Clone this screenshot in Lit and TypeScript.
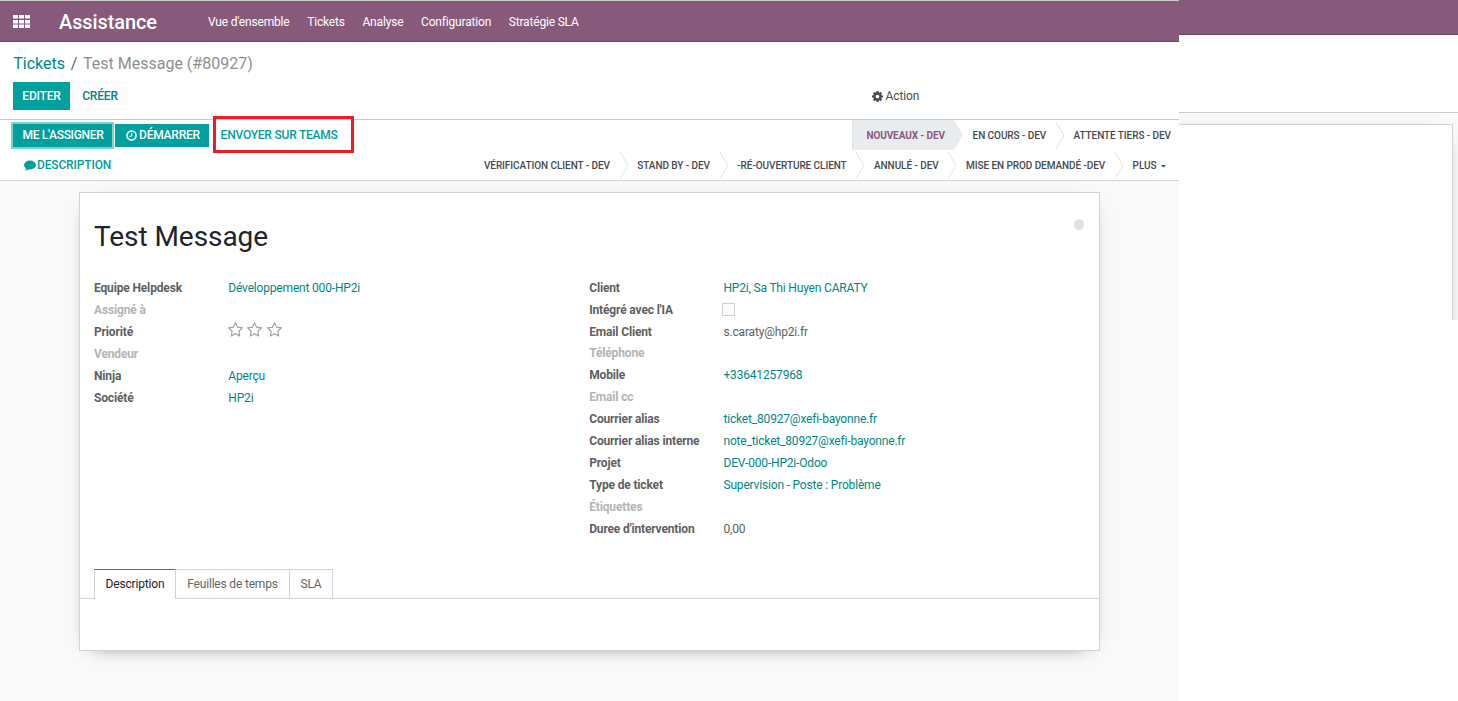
import { LitElement, html, css, svg, nothing } from "lit";
import { customElement } from "lit/decorators.js";

interface Field { label: string; value?: string; kind?: "link" | "text" | "stars" | "check"; short?: boolean; }

const LEFT: Field[] = [
  { label: "Equipe Helpdesk", value: "Développement 000-HP2i", kind: "link" },
  { label: "Assigné à" },
  { label: "Priorité", kind: "stars" },
  { label: "Vendeur" },
  { label: "Ninja", value: "Aperçu", kind: "link" },
  { label: "Société", value: "HP2i", kind: "link" },
];
const RIGHT: Field[] = [
  { label: "Client", value: "HP2i, Sa Thi Huyen CARATY", kind: "link" },
  { label: "Intégré avec l'IA", kind: "check" },
  { label: "Email Client", value: "s.caraty@hp2i.fr", kind: "text", short: true },
  { label: "Téléphone" },
  { label: "Mobile", value: "+33641257968", kind: "link" },
  { label: "Email cc" },
  { label: "Courrier alias", value: "ticket_80927@xefi-bayonne.fr", kind: "link" },
  { label: "Courrier alias interne", value: "note_ticket_80927@xefi-bayonne.fr", kind: "link" },
  { label: "Projet", value: "DEV-000-HP2i-Odoo", kind: "link" },
  { label: "Type de ticket", value: "Supervision - Poste : Problème", kind: "link" },
  { label: "Étiquettes" },
  { label: "Duree d'intervention", value: "0,00", kind: "text" },
];

const star = html`<svg class="star" viewBox="0 0 1664 1600">${svg`<path fill="currentColor" d="M1137 967l306-297-422-62-189-382-189 382-422 62 306 297-73 421 378-199 377 199zm527-357q0 22-26 48l-363 354 86 500q1 7 1 20 0 50-41 50-19 0-40-12l-449-236-449 236q-22 12-40 12-21 0-31.500-14.500t-10.500-35.500q0-6 2-20l86-500-364-354q-25-27-25-48 0-37 56-46l502-73 225-455q19-41 49-41t49 41l225 455 502 73q56 9 56 46z"/>`}</svg>`;

@customElement("app-root")
export class AppRoot extends LitElement {
  static styles = css`
    :host { display: flex; width: 1458px; height: 701px; overflow: hidden; background: #fff; font: 12px/18px Roboto, sans-serif; letter-spacing: -0.18px; color: #4c4c4c; }
    * { box-sizing: border-box; white-space: nowrap; }
    svg { display: block; flex: none; }
    .main { width: 1179px; height: 701px; display: flex; flex-direction: column; background: #f9f9f9; overflow: hidden; }
    .nav { height: 42px; flex: none; display: flex; align-items: center; border-top: 1px solid #ccc; border-bottom: 1px solid #68465f; background: #875a7b; color: #fff; padding-left: 13px; }
    .brand { font-size: 20px; font-weight: 500; margin-left: 29px; width: 149px; line-height: 24px; padding-top: 1px; letter-spacing: -0.1px; }
    .menu { display: flex; gap: 17.700px; padding-top: 2px; }
    .panel { height: 78px; flex: none; background: #fff; border-bottom: 1px solid #ccc; padding: 10px 0 0 13px; }
    .crumbs { display: flex; gap: 5.700px; font-size: 16px; line-height: 24px; height: 30px; color: #666; letter-spacing: 0; padding-left: 0.300px; }
    .crumbs a { color: #008784; }
    .crumbs .here { color: #8f8f8f; }
    .acts { display: flex; align-items: center; height: 28px; font-weight: 500; }
    .edit { width: 57px; height: 28px; background: #00a09d; color: #fff; display: grid; place-items: center; }
    .new { width: 54px; height: 28px; margin-left: 3px; border: 1px solid #f8f8f8; background: #fdfdfd; color: #008784; display: grid; place-items: center; }
    .action { display: flex; align-items: center; gap: 2.500px; margin-left: 745px; font-weight: 400; color: #4c4c4c; letter-spacing: -0.1px; }
    .status { height: 61px; flex: none; background: #fff; border-bottom: 1px solid #ced4da; display: flex; justify-content: space-between; }
    .btns { padding: 4px 0 0 13px; font-weight: 500; letter-spacing: -0.22px; }
    .brow { display: flex; }
    .b { height: 23px; background: #00a09d; color: #fff; display: flex; align-items: center; justify-content: center; gap: 2px; padding-bottom: 1px; }
    .b1 { width: 99px; box-shadow: 0 0 0 2px #80d0ce; padding-left: 1px; letter-spacing: -0.3px; }
    .b2 { width: 94px; margin-left: 3px; padding-left: 2px; }
    .red { width: 141px; height: 37px; margin: -8px 0 -6px 4px; border: 3px solid #ed1c24; color: #00a09d; position: relative; padding: 7px 0 0 4.600px; }
    .desc { display: flex; align-items: center; gap: 1px; color: #00a09d; margin: 9px 0 0 11px; letter-spacing: -0.15px; }
    .steps { font-size: 10px; font-weight: 500; color: #454b50; letter-spacing: -0.07px; padding-right: 8px; }
    .srow { height: 30px; display: flex; justify-content: flex-end; align-items: stretch; line-height: 31px; }
    .srow .chev { margin: 0 8.700px 0 8.700px; }
    .cur { background: #e9ecef; color: #875a7b; border-left: 1px solid #dee2e6; padding: 0 9px 0 13px; font-weight: 700; letter-spacing: -0.1px; }
    .srow .chev.on { margin-left: 0; }
    .caret { width: 5px; height: 3px; margin: 15px 5.500px 0 4px; }
    .sheet { width: 1021px; height: 459px; margin: 11px 0 0 79px; border: 1px solid #ced4da; background: #fff; box-shadow: 0 5px 20px -15px #000; display: flex; flex-direction: column; }
    .head { display: flex; justify-content: space-between; padding: 26px 15px 0 14px; height: 84px; }
    h1 { margin: 0; font-size: 28px; line-height: 35px; font-weight: 400; color: #212529; letter-spacing: -0.06px; }
    .dot { width: 10px; height: 11px; border-radius: 50%; background: #dee2e6; }
    .groups { display: flex; padding-left: 14px; height: 292px; }
    .group { width: 495.200px; }
    .f { display: flex; height: 22px; line-height: 22px; }
    .f.short { height: 21px; }
    .l { width: 134.300px; font-weight: 700; color: #5f5f5f; letter-spacing: -0.15px; }
    .l.empty { color: #b4b4b4; }
    .link { color: #008784; }
    .text { color: #5f5f5f; }
    .stars { display: flex; gap: 4.200px; color: #a0a0a0; padding-top: 1px; margin-left: -0.100px; }
    .star { width: 15px; height: 15px; }
    .check { width: 13px; height: 13px; border: 1px solid #d0d0d0; background: #fbfbfb; margin: 4px 0 0 -1.500px; }
    .tabs { display: flex; height: 30px; border-bottom: 1px solid #ced4da; padding-left: 14px; line-height: 28px; }
    .tab { height: 29px; border: solid #ced4da; border-width: 1px 1px 0 0; text-align: center; color: #666; }
    .tab.on { height: 30px; border-left-width: 1px; border-top-color: #875a7b; background: #fff; color: #212529; width: 82px; }
    .t2 { width: 114px; } .t3 { width: 43px; }
    .side { width: 279px; height: 320px; background: #f9f9f9; overflow: hidden; }
    .snav { height: 35px; background: #875a7b; border-bottom: 1px solid #68465f; }
    .spanel { height: 78px; background: #fff; border-bottom: 1px solid #ccc; }
    .ssheet { width: 374px; height: 400px; margin: 11px 0 0 -100px; background: #fff; border: 1px solid #ced4da; box-shadow: 0 5px 20px -15px #000; }
  `;

  private field(f: Field) {
    return html`<div class="f ${f.short ? "short" : ""}">
      <span class="l ${f.kind ? "" : "empty"}">${f.label}</span>
      ${f.kind === "stars" ? html`<span class="stars">${star}${star}${star}</span>`
        : f.kind === "check" ? html`<span class="check"></span>`
        : f.value ? html`<span class=${f.kind!}>${f.value}</span>` : nothing}
    </div>`;
  }

  private chev(on = false) {
    return html`<svg class="chev ${on ? "on" : ""}" width="10" height="30" viewBox="0 0 10 30">
      ${on ? svg`<path d="M0 0L9 15L0 30Z" fill="#e9ecef"/>` : svg`<path d="M0.500 1.500L9 15.500L0.500 29.500" fill="none" stroke="#dfe2e5"/>`}
    </svg>`;
  }

  render() {
    const c = this.chev();
    return html`
      <div class="main">
        <div class="nav">
          <svg width="17" height="13" viewBox="0 0 17 13" fill="#fff">${[0, 6, 12].map(x => [0, 5, 9.500].map(y => svg`<rect x=${x} y=${y} width="5" height="3.500"/>`))}</svg>
          <span class="brand">Assistance</span>
          <div class="menu"><span>Vue d'ensemble</span><span>Tickets</span><span>Analyse</span><span>Configuration</span><span>Stratégie SLA</span></div>
        </div>
        <div class="panel">
          <div class="crumbs"><a>Tickets</a><span>/</span><span class="here">Test Message (#80927)</span></div>
          <div class="acts">
            <span class="edit">EDITER</span><span class="new">CRÉER</span>
            <span class="action"><svg width="11" height="11" viewBox="0 0 1536 1536"><path fill="#4c4c4c" d="M1024 768q0-106-75-181t-181-75-181 75-75 181 75 181 181 75 181-75 75-181zm512-109v222q0 12-8 23t-20 13l-185 28q-19 54-39 91 35 50 107 138 10 12 10 25t-9 23q-27 37-99 108t-94 71q-12 0-26-9l-138-108q-44 23-91 38-16 136-29 186-7 28-36 28H657q-14 0-24.500-8.500T621 1506l-28-184q-49-16-90-37l-141 107q-10 9-25 9-14 0-25-11-126-114-165-168-7-10-7-23 0-12 8-23 15-21 51-66.500t54-70.500q-27-50-41-99L29 913q-13-2-21-12.500T0 877V655q0-12 8-23t19-13l186-28q14-46 39-92-40-57-107-138-10-12-10-24 0-10 9-23 26-36 98.500-107.500T337 135q13 0 26 10l138 107q44-23 91-38 16-136 29-186 7-28 36-28h222q14 0 24.500 8.500T915 30l28 184q49 16 90 37l142-107q9-9 24-9 13 0 25 10 129 119 165 170 7 8 7 22 0 12-8 23-15 21-51 66.500t-54 70.500q26 50 41 98l183 28q13 2 21 12.500t8 23.500z"/></svg><span>Action</span></span>
          </div>
        </div>
        <div class="status">
          <div class="btns">
            <div class="brow">
              <span class="b b1">ME L'ASSIGNER</span>
              <span class="b b2"><svg width="11" height="11" viewBox="0 0 11 11" fill="none" stroke="#fff"><circle cx="5.500" cy="5.500" r="4.500" stroke-width="1.700"/><path d="M5.800 2.800V6.200H3.400"/></svg><span>DÉMARRER</span></span>
              <span class="red">ENVOYER SUR TEAMS</span>
            </div>
            <div class="desc"><svg width="12" height="11" viewBox="0 0 12 11" fill="#00a09d"><ellipse cx="6" cy="5" rx="6" ry="4.400"/><path d="M2.500 7.500Q2.300 9.500 1 10.700Q4 10.500 5.800 8.500Z"/></svg><span>DESCRIPTION</span></div>
          </div>
          <div class="steps">
            <div class="srow"><span class="cur">NOUVEAUX - DEV</span>${this.chev(true)}<span>EN COURS - DEV</span>${c}<span>ATTENTE TIERS - DEV</span></div>
            <div class="srow"><span>VÉRIFICATION CLIENT - DEV</span>${c}<span>STAND BY - DEV</span>${c}<span>-RÉ-OUVERTURE CLIENT</span>${c}<span>ANNULÉ - DEV</span>${c}<span>MISE EN PROD DEMANDÉ -DEV</span>${c}<span>PLUS</span><svg class="caret" viewBox="0 0 5 3"><path d="M0 0H5L2.500 2.500Z" fill="#454b50"/></svg></div>
          </div>
        </div>
        <div class="sheet">
          <div class="head"><h1>Test Message</h1><span class="dot"></span></div>
          <div class="groups"><div class="group">${LEFT.map(f => this.field(f))}</div><div class="group">${RIGHT.map(f => this.field(f))}</div></div>
          <div class="tabs"><span class="tab on">Description</span><span class="tab t2">Feuilles de temps</span><span class="tab t3">SLA</span></div>
        </div>
      </div>
      <div class="side"><div class="snav"></div><div class="spanel"></div><div class="ssheet"></div></div>`;
  }
}
